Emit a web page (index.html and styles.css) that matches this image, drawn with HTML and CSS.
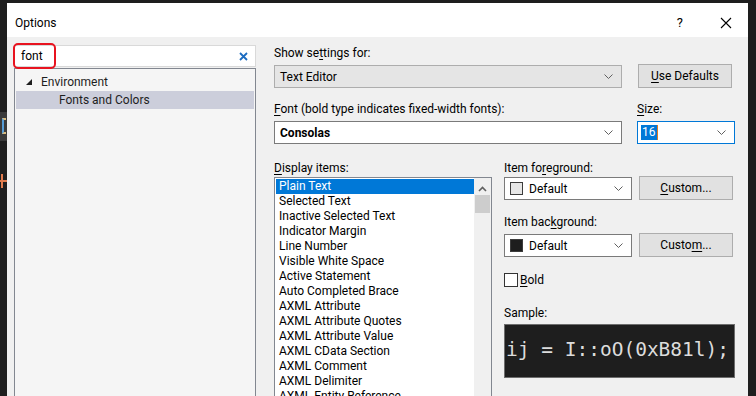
FILE: index.html
```html
<!DOCTYPE html>
<html lang="en">
<head>
  <meta charset="UTF-8" />
  <title>Options</title>
  <link rel="stylesheet" href="styles.css">
</head>
<body>
  <div class="gutter">
    <div class="gutter-line"><div class="brk"></div></div>
    <div class="gutter-plus"></div>
  </div>

  <div class="dialog">
    <div class="titlebar">
      <span class="title">Options</span>
      <span class="help">?</span>
      <svg class="close" width="12" height="12" viewBox="0 0 12 12">
        <path d="M1 1 L11 11 M11 1 L1 11" stroke="#000" stroke-width="1.1" fill="none"/>
      </svg>
    </div>

    <div class="content">
      <div class="left-pane">
        <div class="search">
          <span class="search-text">font</span>
          <svg class="search-clear" width="9" height="9" viewBox="0 0 9 9">
            <path d="M1 1 L8 8 M8 1 L1 8" stroke="#1c6cc1" stroke-width="1.8" fill="none"/>
          </svg>
          <div class="highlight"></div>
        </div>
        <div class="tree">
          <div class="tree-row">
            <svg class="expander" width="7" height="7" viewBox="0 0 7 7"><polygon points="6,0 6,6 0,6" fill="#1e1e1e"/></svg>
            Environment
          </div>
          <div class="tree-row child selected">Fonts and Colors</div>
        </div>
      </div>

      <div class="right-pane">
        <div class="top-grid">
          <div class="field">
            <div class="label">Show se<u>t</u>tings for:</div>
            <div class="combo disabled">
              <span>Text Editor</span>
              <svg class="chev" width="9" height="5" viewBox="0 0 9 5"><path d="M0.5 0.5 L4.5 4.5 L8.5 0.5" stroke="#606060" fill="none"/></svg>
            </div>
          </div>
          <div class="field side">
            <button class="btn defaults"><u>U</u>se Defaults</button>
          </div>

          <div class="field">
            <div class="label"><u>F</u>ont (bold type indicates fixed-width fonts):</div>
            <div class="combo">
              <span class="bold">Consolas</span>
              <svg class="chev" width="9" height="5" viewBox="0 0 9 5"><path d="M0.5 0.5 L4.5 4.5 L8.5 0.5" stroke="#606060" fill="none"/></svg>
            </div>
          </div>
          <div class="field size-field">
            <div class="label"><u>S</u>ize:</div>
            <div class="combo focused">
              <span class="sel-text">16</span><span class="caret"></span>
              <svg class="chev" width="9" height="5" viewBox="0 0 9 5"><path d="M0.5 0.5 L4.5 4.5 L8.5 0.5" stroke="#606060" fill="none"/></svg>
            </div>
          </div>
        </div>

        <div class="lower">
          <div class="items-col">
            <div class="label"><u>D</u>isplay items:</div>
            <div class="listbox">
              <ul class="items">
                <li class="selected">Plain Text</li>
                <li>Selected Text</li>
                <li>Inactive Selected Text</li>
                <li>Indicator Margin</li>
                <li>Line Number</li>
                <li>Visible White Space</li>
                <li>Active Statement</li>
                <li>Auto Completed Brace</li>
                <li>AXML Attribute</li>
                <li>AXML Attribute Quotes</li>
                <li>AXML Attribute Value</li>
                <li>AXML CData Section</li>
                <li>AXML Comment</li>
                <li>AXML Delimiter</li>
                <li>AXML Entity Reference</li>
              </ul>
              <div class="scrollbar">
                <svg class="arrow-up" width="9" height="6" viewBox="0 0 9 6"><path d="M1 5 L4.5 1.5 L8 5" stroke="#606060" stroke-width="1.6" fill="none"/></svg>
                <div class="thumb"></div>
              </div>
            </div>
          </div>

          <div class="color-col">
            <div class="label first">Item fo<u>r</u>eground:</div>
            <div class="color-row">
              <div class="combo color-combo">
                <span class="swatch light"></span>
                <span>Default</span>
                <svg class="chev" width="9" height="5" viewBox="0 0 9 5"><path d="M0.5 0.5 L4.5 4.5 L8.5 0.5" stroke="#606060" fill="none"/></svg>
              </div>
              <button class="btn custom"><u>C</u>ustom...</button>
            </div>

            <div class="label gap">Item bac<u>k</u>ground:</div>
            <div class="color-row">
              <div class="combo color-combo">
                <span class="swatch dark"></span>
                <span>Default</span>
                <svg class="chev" width="9" height="5" viewBox="0 0 9 5"><path d="M0.5 0.5 L4.5 4.5 L8.5 0.5" stroke="#606060" fill="none"/></svg>
              </div>
              <button class="btn custom">Custo<u>m</u>...</button>
            </div>

            <label class="check">
              <span class="box"></span>
              <span><u>B</u>old</span>
            </label>

            <div class="label sample-label">Sample:</div>
            <div class="sample">ij = I::oO(0xB81l);</div>
          </div>
        </div>
      </div>
    </div>
  </div>
</body>
</html>
```

FILE: styles.css
```css
* {
  box-sizing: border-box;
}
body {
  margin: 0;
  width: 756px;
  height: 396px;
  overflow: hidden;
  background: #1e1e1e;
  display: flex;
  font-family: Roboto, "Noto Sans", "Noto Sans CJK KR", sans-serif;
  font-size: 12px;
  color: #000;
}
u {
  text-decoration-thickness: 1px;
  text-underline-offset: 2px;
}

/* editor peeking out on the left */
.gutter {
  width: 7px;
  flex: none;
}
.gutter-line {
  margin-top: 112px;
  height: 29px;
  background: #3a3a3a;
  overflow: hidden;
}
.brk {
  margin: 6px 0 0 2px;
  width: 4px;
  height: 16px;
  border: 2px solid #569cd6;
  border-right: none;
  border-top-color: #d7ba7d;
  border-bottom-color: #d7ba7d;
}
.gutter-plus {
  margin-top: 33px;
  width: 7px;
  height: 14px;
  background: linear-gradient(#e07b4d, #e07b4d) 0 6px / 7px 2px no-repeat,
              linear-gradient(#e07b4d, #e07b4d) 1px 0 / 2px 14px no-repeat;
}

.dialog {
  width: 741px;
  margin-top: 3px;
  background: #f0f0f0;
  flex: none;
  display: flex;
  flex-direction: column;
  overflow: hidden;
}
.titlebar {
  flex: none;
  height: 34px;
  background: #fff;
  display: flex;
  align-items: center;
  padding: 5px 0 0 8px;
}
.title {
  flex: 1;
  font-size: 12px;
}
.help {
  font-size: 13px;
  margin-right: 37px;
}
.close {
  margin-right: 16px;
}

.content {
  flex: 1;
  min-height: 0;
  display: flex;
  padding: 8px 0 0 7px;
}

/* left: search + tree */
.left-pane {
  width: 242px;
  display: flex;
  flex-direction: column;
}
.search {
  flex: none;
  position: relative;
  height: 22px;
  background: #fff;
  border: 1px solid #d9d9d9;
  display: flex;
  align-items: center;
  padding-left: 6px;
}
.search-text {
  flex: 1;
}
.search-clear {
  margin-right: 7px;
}
.highlight {
  position: absolute;
  left: -2px;
  top: -3px;
  width: 43px;
  height: 26px;
  border: 2px solid #e8131f;
  border-radius: 5px;
}
.tree {
  flex: 1;
  margin-top: 1px;
  background: #f5f5f5;
  border: 1px solid #828790;
  border-bottom: none;
  padding: 4px 1px 0;
}
.tree-row {
  height: 18px;
  line-height: 18px;
  display: flex;
  align-items: center;
  padding-left: 10px;
  color: #1e1e1e;
}
.expander {
  margin-right: 8px;
}
.tree-row.child {
  padding-left: 43px;
}
.tree-row.selected {
  background: #cccedb;
}

/* right side */
.right-pane {
  margin-left: 18px;
  width: 462px;
}
.label {
  height: 16px;
  line-height: 16px;
  white-space: nowrap;
}
.top-grid {
  display: grid;
  grid-template-columns: 348px 98px;
  column-gap: 15px;
  row-gap: 13px;
}
.field .label {
  margin-bottom: 4px;
}
.field.side {
  padding-top: 19px;
  padding-left: 1px;
}
.combo {
  height: 23px;
  border: 1px solid #7a7a7a;
  background: #fff;
  display: flex;
  align-items: center;
  padding: 0 8px 0 5px;
}
.combo .chev {
  margin-left: auto;
}
.combo.disabled {
  background: #e5e5e5;
  border-color: #adadad;
}
.bold {
  font-weight: bold;
}
.combo.focused {
  border-color: #0078d7;
  padding-left: 3px;
}
.sel-text {
  background: #0078d7;
  color: #fff;
  line-height: 15px;
  padding: 0 1px;
}
.caret {
  width: 1px;
  height: 15px;
  background: #e07b20;
}
.btn {
  font: inherit;
  height: 24px;
  width: 94px;
  background: #e1e1e1;
  border: 1px solid #adadad;
  padding: 0;
  color: #000;
}

.lower {
  display: flex;
  margin-top: 16px;
}
.items-col {
  width: 218px;
}
.items-col .label {
  margin-bottom: 1px;
}
.listbox {
  height: 230px;
  border: 1px solid #828790;
  border-bottom: none;
  background: #fff;
  display: flex;
  padding: 1px 0 0 1px;
}
.items {
  list-style: none;
  margin: 0;
  padding: 0;
  width: 198px;
  overflow: hidden;
}
.items li {
  height: 15px;
  line-height: 15px;
  padding-left: 3px;
  white-space: nowrap;
}
.items li.selected {
  background: #0078d7;
  color: #fff;
}
.scrollbar {
  width: 17px;
  background: #f0f0f0;
  display: flex;
  flex-direction: column;
  align-items: center;
  margin-top: -1px;
}
.arrow-up {
  margin-top: 8px;
}
.thumb {
  margin-top: 3px;
  width: 15px;
  height: 18px;
  background: #cdcdcd;
}

.color-col {
  margin-left: 12px;
  width: 231px;
}
.color-col .label.gap {
  margin-top: 14px;
  margin-bottom: 3px;
}
.color-row {
  display: flex;
  align-items: flex-start;
}
.color-combo {
  width: 128px;
  padding-left: 5px;
  margin-top: 1px;
}
.swatch {
  width: 13px;
  height: 13px;
  border: 1px solid #3c3c3c;
  margin-right: 6px;
}
.swatch.light {
  background: #e6e6e6;
}
.swatch.dark {
  background: #1e1e1e;
}
.custom {
  margin-left: 7px;
}
.check {
  display: flex;
  align-items: center;
  margin-top: 16px;
  height: 14px;
}
.box {
  width: 14px;
  height: 14px;
  border: 1px solid #333;
  background: #fff;
  margin-right: 2px;
}
.sample-label {
  margin-top: 18px;
  margin-bottom: 3px;
}
.sample {
  width: 231px;
  height: 54px;
  background: #1e1e1e;
  border: 1px solid #6d6d6d;
  color: #dcdcdc;
  font-family: "DejaVu Sans Mono", "Liberation Mono", monospace;
  font-size: 19.5px;
  line-height: 50px;
  padding-left: 1px;
  white-space: nowrap;
  overflow: hidden;
}
```
